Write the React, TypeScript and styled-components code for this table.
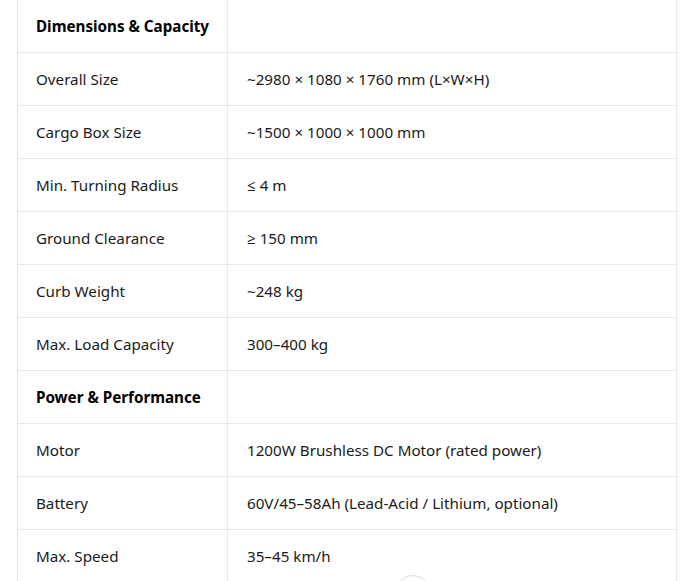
import React from "react";
import styled, { createGlobalStyle } from "styled-components";

const Global = createGlobalStyle`
  html, body { margin: 0; padding: 0; background: #ffffff; overflow: hidden; }
  body { font-family: "Noto Sans", "Open Sans", "DejaVu Sans", sans-serif; }
`;

const Page = styled.div`
  position: relative;
  width: 684px;
  height: 581px;
  overflow: hidden;
  padding: 0 8px 0 17px;
  box-sizing: border-box;
`;

const Table = styled.table`
  width: 660px;
  margin-top: -1px;
  border-collapse: collapse;
  table-layout: fixed;
  font-size: 15.2px;
  color: #1a1a1a;
`;

const Row = styled.tr``;

const Cell = styled.td<{ $head?: boolean }>`
  border: 1px solid #e8e8e8;
  height: 53px;
  padding: 0 18px;
  box-sizing: border-box;
  vertical-align: middle;
  line-height: 20px;
  white-space: nowrap;
  overflow: visible;
  font-weight: ${(p) => (p.$head ? 700 : 400)};
  color: ${(p) => (p.$head ? "#000000" : "#1a1a1a")};
  &:nth-child(2) { padding-left: 19px; }
`;

const ScrollButton = styled.div`
  position: absolute;
  left: 396px;
  top: 575px;
  width: 34px;
  height: 34px;
  border-radius: 50%;
  border: 1px solid #dcdcdc;
  background: #ffffff;
  box-sizing: border-box;
`;

type R = { k: string; v?: string; head?: boolean };

const rows: R[] = [
  { k: "Dimensions & Capacity", head: true },
  { k: "Overall Size", v: "~2980 × 1080 × 1760 mm (L×W×H)" },
  { k: "Cargo Box Size", v: "~1500 × 1000 × 1000 mm" },
  { k: "Min. Turning Radius", v: "≤ 4 m" },
  { k: "Ground Clearance", v: "≥ 150 mm" },
  { k: "Curb Weight", v: "~248 kg" },
  { k: "Max. Load Capacity", v: "300–400 kg" },
  { k: "Power & Performance", head: true },
  { k: "Motor", v: "1200W Brushless DC Motor (rated power)" },
  { k: "Battery", v: "60V/45–58Ah (Lead-Acid / Lithium, optional)" },
  { k: "Max. Speed", v: "35–45 km/h" },
];

export default function App() {
  return (
    <>
      <Global />
      <Page>
        <Table>
          <colgroup>
            <col style={{ width: 210 }} />
            <col />
          </colgroup>
          <tbody>
            {rows.map((r) => (
              <Row key={r.k}>
                <Cell $head={r.head}>{r.k}</Cell>
                <Cell>{r.v ?? ""}</Cell>
              </Row>
            ))}
          </tbody>
        </Table>
        <ScrollButton />
      </Page>
    </>
  );
}
